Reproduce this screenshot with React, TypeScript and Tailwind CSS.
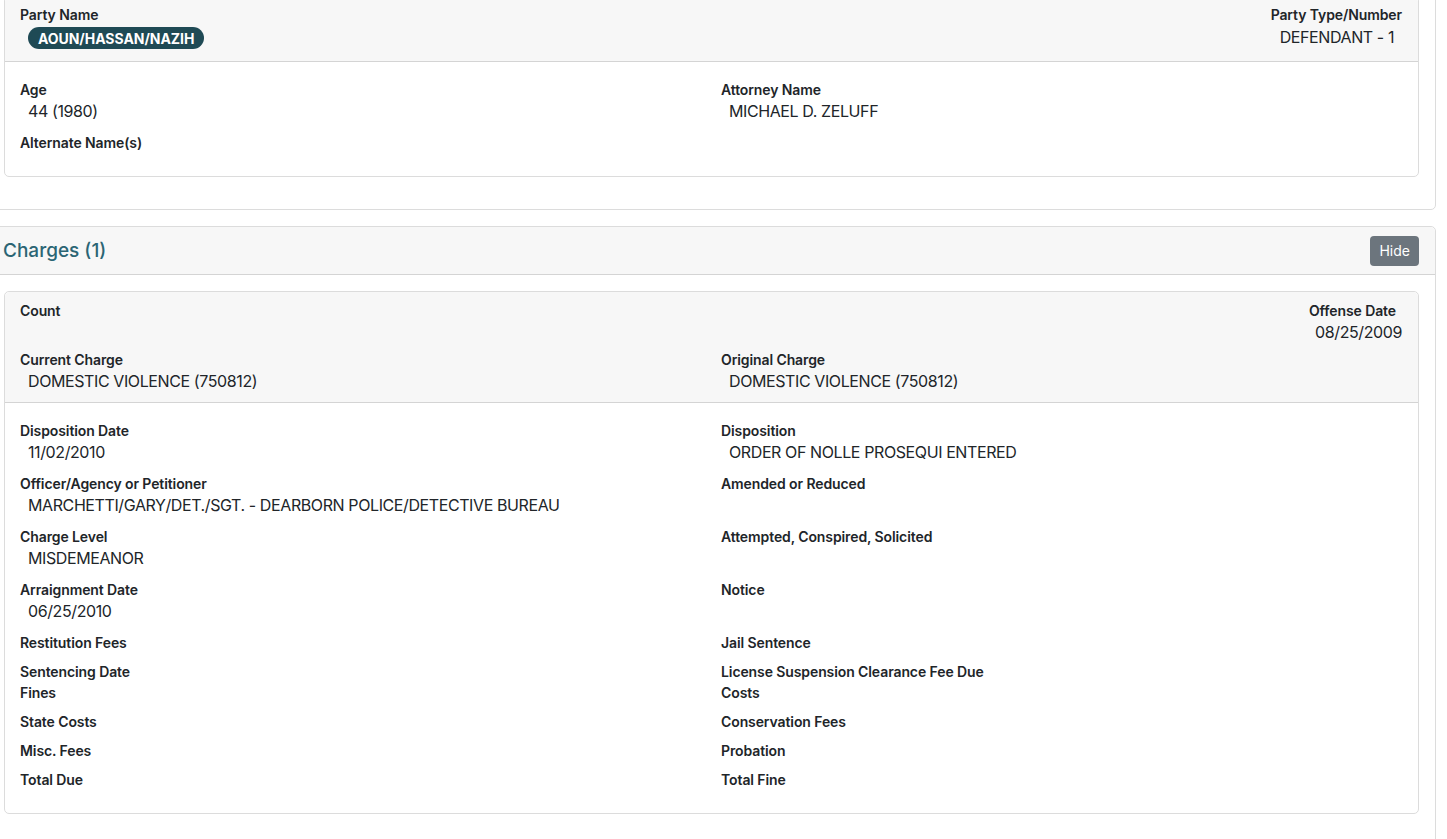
const FONT = { fontFamily: 'Inter, "Noto Sans", "Liberation Sans", sans-serif' }

const LABEL = 'text-[14px] leading-[19px] font-semibold text-[#212529] tracking-[-0.1px]'
const VALUE = 'text-[16px] leading-[24px] text-[#212529] tracking-[-0.4px]'

function Field({ label, value, tight }: { label: string; value?: string; tight?: boolean }) {
  return (
    <div className={tight ? 'mb-[2px]' : 'mb-[10px]'}>
      <div className={LABEL}>{label}</div>
      {value !== undefined && <div className={`${VALUE} pl-2`}>{value}</div>}
    </div>
  )
}

export default function App() {
  return (
    <div className="min-h-screen bg-white overflow-hidden" style={FONT}>
      <div className="w-[1449px] -ml-[13px] -mt-[21px]">
        {/* Party card */}
        <div className="border border-[#dcdcdc] rounded-[5px] bg-white px-4 pt-4 pb-8">
          <div className="border border-[#dcdcdc] rounded-[5px] bg-white">
            <div className="bg-[#f7f7f7] border-b border-[#d4d4d4] rounded-t-[5px] pl-[15px] pr-4 pt-[8px] pb-[12px] flex justify-between">
              <div>
                <div className={LABEL}>Party Name</div>
                <div className="mt-[3px] ml-2 flex">
                  <span className="flex items-center h-[22px] px-[10px] rounded-full bg-[#1f4a55] text-white text-[14px] font-bold tracking-[-0.05px]">
                    AOUN/HASSAN/NAZIH
                  </span>
                </div>
              </div>
              <div className="text-right">
                <div className={LABEL}>Party Type/Number</div>
                <div className={`${VALUE} mt-[1px] pr-2`}>DEFENDANT - 1</div>
              </div>
            </div>
            <div className="pl-[15px] pr-4 pt-[18px] pb-[14px] grid grid-cols-2 gap-x-[20px]">
              <div>
                <Field label="Age" value="44 (1980)" />
                <Field label="Alternate Name(s)" />
              </div>
              <div>
                <Field label="Attorney Name" value="MICHAEL D. ZELUFF" />
              </div>
            </div>
          </div>
        </div>

        {/* Charges card */}
        <div className="mt-4 border border-[#dcdcdc] rounded-[5px] bg-white">
          <div className="bg-[#f7f7f7] border-b border-[#d4d4d4] rounded-t-[5px] h-[48px] pl-[15px] pr-4 flex items-center justify-between">
            <h2 className="text-[19px] leading-[24px] text-[#2b6574] font-medium">Charges (1)</h2>
            <button className="h-[30px] px-[9px] rounded-[4px] bg-[#6c757d] text-white text-[14px]">Hide</button>
          </div>
          <div className="px-4 pt-4 pb-8">
            <div className="border border-[#dcdcdc] rounded-[5px] bg-white">
              <div className="bg-[#f7f7f7] border-b border-[#d4d4d4] rounded-t-[5px] pl-[15px] pr-4 pt-[9px] pb-[9px]">
                <div className="flex justify-between h-[43px]">
                  <div className={LABEL}>Count</div>
                  <div className="text-right">
                    <div className={`${LABEL} pr-[6px]`}>Offense Date</div>
                    <div className={VALUE}>08/25/2009</div>
                  </div>
                </div>
                <div className="mt-[6px] grid grid-cols-2 gap-x-[20px]">
                  <div>
                    <div className={LABEL}>Current Charge</div>
                    <div className={`${VALUE} pl-2`}>DOMESTIC VIOLENCE (750812)</div>
                  </div>
                  <div>
                    <div className={LABEL}>Original Charge</div>
                    <div className={`${VALUE} pl-2`}>DOMESTIC VIOLENCE (750812)</div>
                  </div>
                </div>
              </div>
              <div className="pl-[15px] pr-4 pt-[18px] pb-[14px] grid grid-cols-2 gap-x-[20px]">
                <div>
                  <Field label="Disposition Date" value="11/02/2010" />
                  <Field label="Officer/Agency or Petitioner" value="MARCHETTI/GARY/DET./SGT. - DEARBORN POLICE/DETECTIVE BUREAU" />
                  <Field label="Charge Level" value="MISDEMEANOR" />
                  <Field label="Arraignment Date" value="06/25/2010" />
                  <Field label="Restitution Fees" />
                  <Field label="Sentencing Date" tight />
                  <Field label="Fines" />
                  <Field label="State Costs" />
                  <Field label="Misc. Fees" />
                  <Field label="Total Due" />
                </div>
                <div>
                  <Field label="Disposition" value="ORDER OF NOLLE PROSEQUI ENTERED" />
                  <div className="h-[53px]">
                    <Field label="Amended or Reduced" />
                  </div>
                  <div className="h-[53px]">
                    <Field label="Attempted, Conspired, Solicited" />
                  </div>
                  <div className="h-[53px]">
                    <Field label="Notice" />
                  </div>
                  <Field label="Jail Sentence" />
                  <Field label="License Suspension Clearance Fee Due" tight />
                  <Field label="Costs" />
                  <Field label="Conservation Fees" />
                  <Field label="Probation" />
                  <Field label="Total Fine" />
                </div>
              </div>
            </div>
          </div>
        </div>
      </div>
    </div>
  )
}
